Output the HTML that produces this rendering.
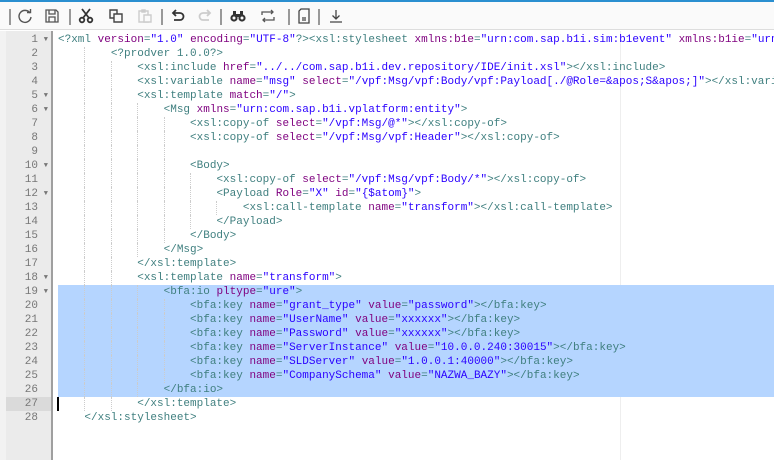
<!DOCTYPE html>
<html><head><meta charset="utf-8"><style>
*{margin:0;padding:0;box-sizing:border-box}
body{width:774px;height:460px;overflow:hidden;background:#fff;font-family:"Liberation Mono",monospace;position:relative}
#tb{position:absolute;left:0;top:0;width:774px;height:30px;background:#fafafa;border-top:2px solid #2a8fd0;border-bottom:1px solid #ddd}
.sep{position:absolute;top:7px;width:2px;height:16px;background:#999}
#tb svg{position:absolute;top:6px}
#strip{position:absolute;left:0;top:31px;width:6px;height:429px;background:#f2f2f2}
#gut{position:absolute;left:6px;top:31px;width:47px;height:429px;background:#ebebeb;border-right:2px solid #9f9f9f}
.gl{position:absolute;left:0;width:45px;height:14px;font-size:11px;line-height:14px;color:#777;text-align:right;padding-right:13px}
.gl.act{background:#dadada}
.fa{position:absolute;right:3px;top:0;font-size:7px;color:#777}
#ed{position:absolute;left:55px;top:31px;width:719px;height:429px;overflow:hidden}
.sel{position:absolute;left:3px;right:0;top:254px;height:112px;background:#b5d5ff}
.pm{position:absolute;left:565px;top:0;width:1px;height:429px;background:#eee}
.ln{position:absolute;left:3px;height:14px;font-size:11px;line-height:14px;white-space:pre;color:#000}
.g{position:absolute;width:1px;height:14px;border-left:1px dotted #ccc}
.t{color:#3f7f7f}.a{color:#7f007f}.s{color:#2a00ff}
.cur{position:absolute;left:2px;top:366px;width:2px;height:14px;background:#000}
</style></head><body>
<div id="tb">
<div class="sep" style="left:9px"></div>
<svg style="left:17px" width="16" height="16" viewBox="0 0 16 16" fill="none" stroke="#555" stroke-width="1.4"><path d="M13 5A6 6 0 1 0 14 9"/><path d="M10 4.5h3.5V1"/></svg>
<svg style="left:44px" width="16" height="16" viewBox="0 0 16 16" fill="none" stroke="#555" stroke-width="1.3"><path d="M2 2h10l2 2v10H2z"/><path d="M5 2v4h6V2M5 14v-5h6v5"/></svg>
<div class="sep" style="left:69px"></div>
<svg style="left:78px" width="16" height="16" viewBox="0 0 16 16" fill="none" stroke="#333" stroke-width="1.8"><circle cx="4" cy="12" r="2.3"/><circle cx="12" cy="12" r="2.3"/><path d="M5 10L12 1M11 10L4 1"/></svg>
<svg style="left:108px" width="16" height="16" viewBox="0 0 16 16" fill="none" stroke="#444" stroke-width="1.4"><path d="M2 2h7v8H2z"/><path d="M6 6h8v8H6z" fill="#fafafa"/></svg>
<svg style="left:137px" width="16" height="16" viewBox="0 0 16 16" fill="none" stroke="#ccc" stroke-width="1.4"><path d="M2 3h9v11H2z"/><path d="M5 2h3v2H5z"/><path d="M7 7h7v7H7z" fill="#fafafa"/></svg>
<div class="sep" style="left:161px"></div>
<svg style="left:170px" width="16" height="16" viewBox="0 0 16 16" fill="none" stroke="#333" stroke-width="1.8"><path d="M3 5h7a3.5 3.5 0 0 1 0 7H4"/><path d="M6 2L3 5l3 3"/></svg>
<svg style="left:197px" width="16" height="16" viewBox="0 0 16 16" fill="none" stroke="#ccc" stroke-width="1.8"><path d="M13 5H6a3.5 3.5 0 0 0 0 7h6"/><path d="M10 2l3 3-3 3"/></svg>
<div class="sep" style="left:220px"></div>
<svg style="left:230px" width="16" height="16" viewBox="0 0 16 16" fill="#333"><circle cx="4" cy="10" r="3.6"/><circle cx="12" cy="10" r="3.6"/><rect x="3" y="3" width="3" height="5"/><rect x="10" y="3" width="3" height="5"/><rect x="6" y="6" width="4" height="3"/><circle cx="4" cy="10" r="1.5" fill="#fafafa"/><circle cx="12" cy="10" r="1.5" fill="#fafafa"/></svg>
<svg style="left:260px" width="16" height="16" viewBox="0 0 16 16" fill="none" stroke="#555" stroke-width="1.3"><path d="M2 7V4h11M11 2l2 2-2 2M14 9v3H3M5 10l-2 2 2 2"/></svg>
<div class="sep" style="left:288px"></div>
<svg style="left:296px" width="16" height="16" viewBox="0 0 16 16" fill="none" stroke="#444" stroke-width="1.3"><path d="M5 1h8v14H3V3z"/><path d="M6 10h4M6 12h4"/></svg>
<div class="sep" style="left:318px"></div>
<svg style="left:328px" width="16" height="16" viewBox="0 0 16 16" fill="none" stroke="#444" stroke-width="1.3"><path d="M8 2v9M4.5 7.5L8 11l3.5-3.5M2 14h12"/></svg>
</div>
<div id="strip"></div>
<div id="gut"></div>
<div id="ed">
<div class="pm"></div>
<div class="sel"></div>
<div class="cur"></div>
<div id="lines"></div>
</div>
<script>
var L=[
[0,'<span class="t">&lt;?xml </span><span class="a">version</span><span class="t">=</span><span class="s">"1.0"</span><span class="t"> </span><span class="a">encoding</span><span class="t">=</span><span class="s">"UTF-8"</span><span class="t">?&gt;&lt;xsl:stylesheet </span><span class="a">xmlns:b1e</span><span class="t">=</span><span class="s">"urn:com.sap.b1i.sim:b1event"</span><span class="t"> </span><span class="a">xmlns:b1ie</span><span class="t">=</span><span class="s">"urn:com.sap.b1i.</span>'],
[2,'<span class="t">&lt;?prodver 1.0.0?&gt;</span>'],
[3,'<span class="t">&lt;xsl:include </span><span class="a">href</span><span class="t">=</span><span class="s">"../../com.sap.b1i.dev.repository/IDE/init.xsl"</span><span class="t">&gt;&lt;/xsl:include&gt;</span>'],
[3,'<span class="t">&lt;xsl:variable </span><span class="a">name</span><span class="t">=</span><span class="s">"msg"</span><span class="t"> </span><span class="a">select</span><span class="t">=</span><span class="s">"/vpf:Msg/vpf:Body/vpf:Payload[./@Role=&amp;apos;S&amp;apos;]"</span><span class="t">&gt;&lt;/xsl:variable&gt;</span>'],
[3,'<span class="t">&lt;xsl:template </span><span class="a">match</span><span class="t">=</span><span class="s">"/"</span><span class="t">&gt;</span>'],
[4,'<span class="t">&lt;Msg </span><span class="a">xmlns</span><span class="t">=</span><span class="s">"urn:com.sap.b1i.vplatform:entity"</span><span class="t">&gt;</span>'],
[5,'<span class="t">&lt;xsl:copy-of </span><span class="a">select</span><span class="t">=</span><span class="s">"/vpf:Msg/@*"</span><span class="t">&gt;&lt;/xsl:copy-of&gt;</span>'],
[5,'<span class="t">&lt;xsl:copy-of </span><span class="a">select</span><span class="t">=</span><span class="s">"/vpf:Msg/vpf:Header"</span><span class="t">&gt;&lt;/xsl:copy-of&gt;</span>'],
[5,''],
[5,'<span class="t">&lt;Body&gt;</span>'],
[6,'<span class="t">&lt;xsl:copy-of </span><span class="a">select</span><span class="t">=</span><span class="s">"/vpf:Msg/vpf:Body/*"</span><span class="t">&gt;&lt;/xsl:copy-of&gt;</span>'],
[6,'<span class="t">&lt;Payload </span><span class="a">Role</span><span class="t">=</span><span class="s">"X"</span><span class="t"> </span><span class="a">id</span><span class="t">=</span><span class="s">"{$atom}"</span><span class="t">&gt;</span>'],
[7,'<span class="t">&lt;xsl:call-template </span><span class="a">name</span><span class="t">=</span><span class="s">"transform"</span><span class="t">&gt;&lt;/xsl:call-template&gt;</span>'],
[6,'<span class="t">&lt;/Payload&gt;</span>'],
[5,'<span class="t">&lt;/Body&gt;</span>'],
[4,'<span class="t">&lt;/Msg&gt;</span>'],
[3,'<span class="t">&lt;/xsl:template&gt;</span>'],
[3,'<span class="t">&lt;xsl:template </span><span class="a">name</span><span class="t">=</span><span class="s">"transform"</span><span class="t">&gt;</span>'],
[4,'<span class="t">&lt;bfa:io </span><span class="a">pltype</span><span class="t">=</span><span class="s">"ure"</span><span class="t">&gt;</span>'],
[5,'<span class="t">&lt;bfa:key </span><span class="a">name</span><span class="t">=</span><span class="s">"grant_type"</span><span class="t"> </span><span class="a">value</span><span class="t">=</span><span class="s">"password"</span><span class="t">&gt;&lt;/bfa:key&gt;</span>'],
[5,'<span class="t">&lt;bfa:key </span><span class="a">name</span><span class="t">=</span><span class="s">"UserName"</span><span class="t"> </span><span class="a">value</span><span class="t">=</span><span class="s">"xxxxxx"</span><span class="t">&gt;&lt;/bfa:key&gt;</span>'],
[5,'<span class="t">&lt;bfa:key </span><span class="a">name</span><span class="t">=</span><span class="s">"Password"</span><span class="t"> </span><span class="a">value</span><span class="t">=</span><span class="s">"xxxxxx"</span><span class="t">&gt;&lt;/bfa:key&gt;</span>'],
[5,'<span class="t">&lt;bfa:key </span><span class="a">name</span><span class="t">=</span><span class="s">"ServerInstance"</span><span class="t"> </span><span class="a">value</span><span class="t">=</span><span class="s">"10.0.0.240:30015"</span><span class="t">&gt;&lt;/bfa:key&gt;</span>'],
[5,'<span class="t">&lt;bfa:key </span><span class="a">name</span><span class="t">=</span><span class="s">"SLDServer"</span><span class="t"> </span><span class="a">value</span><span class="t">=</span><span class="s">"1.0.0.1:40000"</span><span class="t">&gt;&lt;/bfa:key&gt;</span>'],
[5,'<span class="t">&lt;bfa:key </span><span class="a">name</span><span class="t">=</span><span class="s">"CompanySchema"</span><span class="t"> </span><span class="a">value</span><span class="t">=</span><span class="s">"NAZWA_BAZY"</span><span class="t">&gt;&lt;/bfa:key&gt;</span>'],
[4,'<span class="t">&lt;/bfa:io&gt;</span>'],
[3,'<span class="t">&lt;/xsl:template&gt;</span>'],
[1,'<span class="t">&lt;/xsl:stylesheet&gt;</span>']
];
var folds={1:1,5:1,6:1,10:1,12:1,18:1,19:1};
var h='',g='',cw=6.6,off=2;
L.forEach(function(l,i){
 var n=l[0];var top=off+i*14;
 h+='<div class="ln" style="top:'+top+'px">'+'    '.repeat(n)+l[1]+'</div>';
 for(var k=1;k<n;k++)h+='<div class="g" style="left:'+(3+k*4*cw)+'px;top:'+top+'px"></div>';
 g+='<div class="gl'+(i==26?' act':'')+'" style="top:'+top+'px">'+(i+1)+(folds[i+1]?'<span class="fa">▼</span>':'')+'</div>';
});
document.getElementById('lines').innerHTML=h;
document.getElementById('gut').innerHTML=g;
</script>
</body></html>
